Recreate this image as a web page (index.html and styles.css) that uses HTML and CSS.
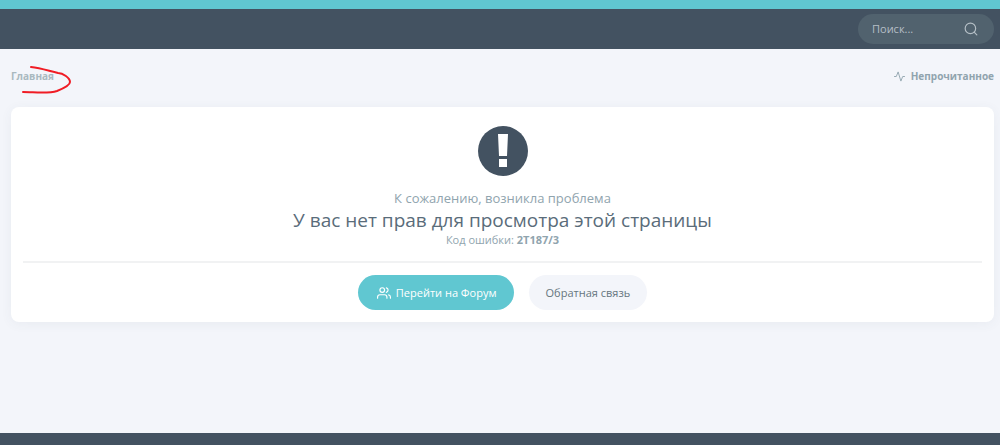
FILE: index.html
```html
<!DOCTYPE html>
<html lang="ru">
<head>
    <meta charset="UTF-8">
    <meta name="viewport" content="width=device-width, initial-scale=1.0">
    <title>Ошибка</title>
    <link rel="stylesheet" href="styles.css">
</head>
<body>
    <header class="header">
        <form class="search" role="search">
            <input type="text" id="search" placeholder="Поиск..." aria-label="Поиск">
            <button type="submit" aria-label="Найти">
                <svg class="icon" viewBox="0 0 24 24"><circle cx="11" cy="11" r="9"/><path d="M22 22l-4.6-4.6"/></svg>
            </button>
        </form>
    </header>

    <main class="content">
        <nav class="breadcrumb">
            <a href="#" class="home">Главная</a>
            <svg class="mark" viewBox="0 0 50 30"><path d="M9 2C19 3 27 6 36 8C41 8 48 13 48 17C48 20 40 24 35 26C26 29 12 27 1 27"/></svg>
            <a href="#" class="unread">
                <svg class="icon" viewBox="0 0 24 24"><path d="M23 12h-4l-4 10L9 2l-4 10H1"/></svg>
                Непрочитанное
            </a>
        </nav>

        <section class="card">
            <svg class="alert" viewBox="0 0 50 50"><circle cx="25" cy="25" r="25"/><path d="M20 8h10l-1 22h-8zM21 33h8v8h-8z"/></svg>
            <p class="lead">К сожалению, возникла проблема</p>
            <h1>У вас нет прав для просмотра этой страницы</h1>
            <p class="code">Код ошибки: <strong>2T187/3</strong></p>
            <div class="actions">
                <a href="#" class="btn btn-primary">
                    <svg class="icon" viewBox="0 0 24 24"><path d="M17 21v-2a4 4 0 0 0-4-4H5a4 4 0 0 0-4 4v2"/><circle cx="9" cy="7" r="4"/><path d="M23 21v-2a4 4 0 0 0-3-3.87M16 3.13a4 4 0 0 1 0 7.75"/></svg>
                    Перейти на Форум
                </a>
                <a href="#" class="btn">Обратная связь</a>
            </div>
        </section>
    </main>

    <footer class="footer"></footer>
</body>
</html>
```
FILE: styles.css
```css
* {
    margin: 0;
    padding: 0;
    box-sizing: border-box;
}

body {
    display: flex;
    flex-direction: column;
    min-height: 100vh;
    background-color: #f3f5fa;
    color: #90a4ae;
    font-family: "Open Sans", sans-serif;
    font-size: 11px;
    line-height: 16px;
}

a {
    color: inherit;
    text-decoration: none;
}

.icon {
    width: 14px;
    height: 14px;
    fill: none;
    stroke: currentColor;
    stroke-width: 2;
    stroke-linecap: round;
    stroke-linejoin: round;
}

/* Header */
.header {
    display: flex;
    justify-content: flex-end;
    padding: 5px 6px;
    background-color: #435261;
    border-top: 9px solid #60c7d1;
}

.search {
    display: flex;
    align-items: center;
    width: 136px;
    height: 30px;
    padding: 0 16px 0 14px;
    background-color: #51626e;
    border-radius: 15px;
}

.search input {
    flex: 1;
    min-width: 0;
    background: none;
    border: none;
    outline: none;
    color: #b5bfc6;
    font: inherit;
}

.search input::placeholder {
    color: #b5bfc6;
    opacity: 1;
}

.search button {
    display: flex;
    background: none;
    border: none;
    color: #b5bfc6;
}

/* Content */
.content {
    flex: 1;
    padding: 19px 6px 19px 11px;
}

.breadcrumb {
    position: relative;
    display: flex;
    justify-content: space-between;
    margin-bottom: 23px;
    font-size: 10px;
    font-weight: 700;
}

.home {
    color: #a9b9c0;
}

.mark {
    position: absolute;
    top: -3px;
    left: 11px;
    width: 50px;
    height: 30px;
    fill: none;
    stroke: #f01c24;
    stroke-width: 2;
    stroke-linecap: round;
}

.unread {
    display: flex;
    align-items: center;
    gap: 6px;
}

.unread .icon {
    width: 11px;
    height: 11px;
}

.card {
    padding: 19px 12px 12px;
    background-color: #fff;
    border-radius: 8px;
    box-shadow: 0 2px 12px rgba(67, 82, 97, 0.06);
    text-align: center;
}

.alert {
    display: block;
    width: 50px;
    height: 50px;
    margin: 0 auto 12px;
    fill: #435261;
}

.alert path {
    fill: #fff;
}

.lead {
    font-size: 13px;
    line-height: 20px;
}

h1 {
    color: #5a6c7a;
    font-size: 19px;
    font-weight: 400;
    line-height: 24px;
}

.actions {
    display: flex;
    justify-content: center;
    gap: 15px;
    margin-top: 13px;
    padding-top: 12px;
    border-top: 2px solid #f1f2f3;
}

.btn {
    display: flex;
    align-items: center;
    gap: 5px;
    height: 35px;
    padding: 0 17px;
    background-color: #f3f5fa;
    border-radius: 18px;
    color: #66767e;
}

.btn-primary {
    padding-left: 19px;
    background-color: #60c7d1;
    color: #fff;
}

/* Footer */
.footer {
    height: 12px;
    background-color: #435261;
}
```
